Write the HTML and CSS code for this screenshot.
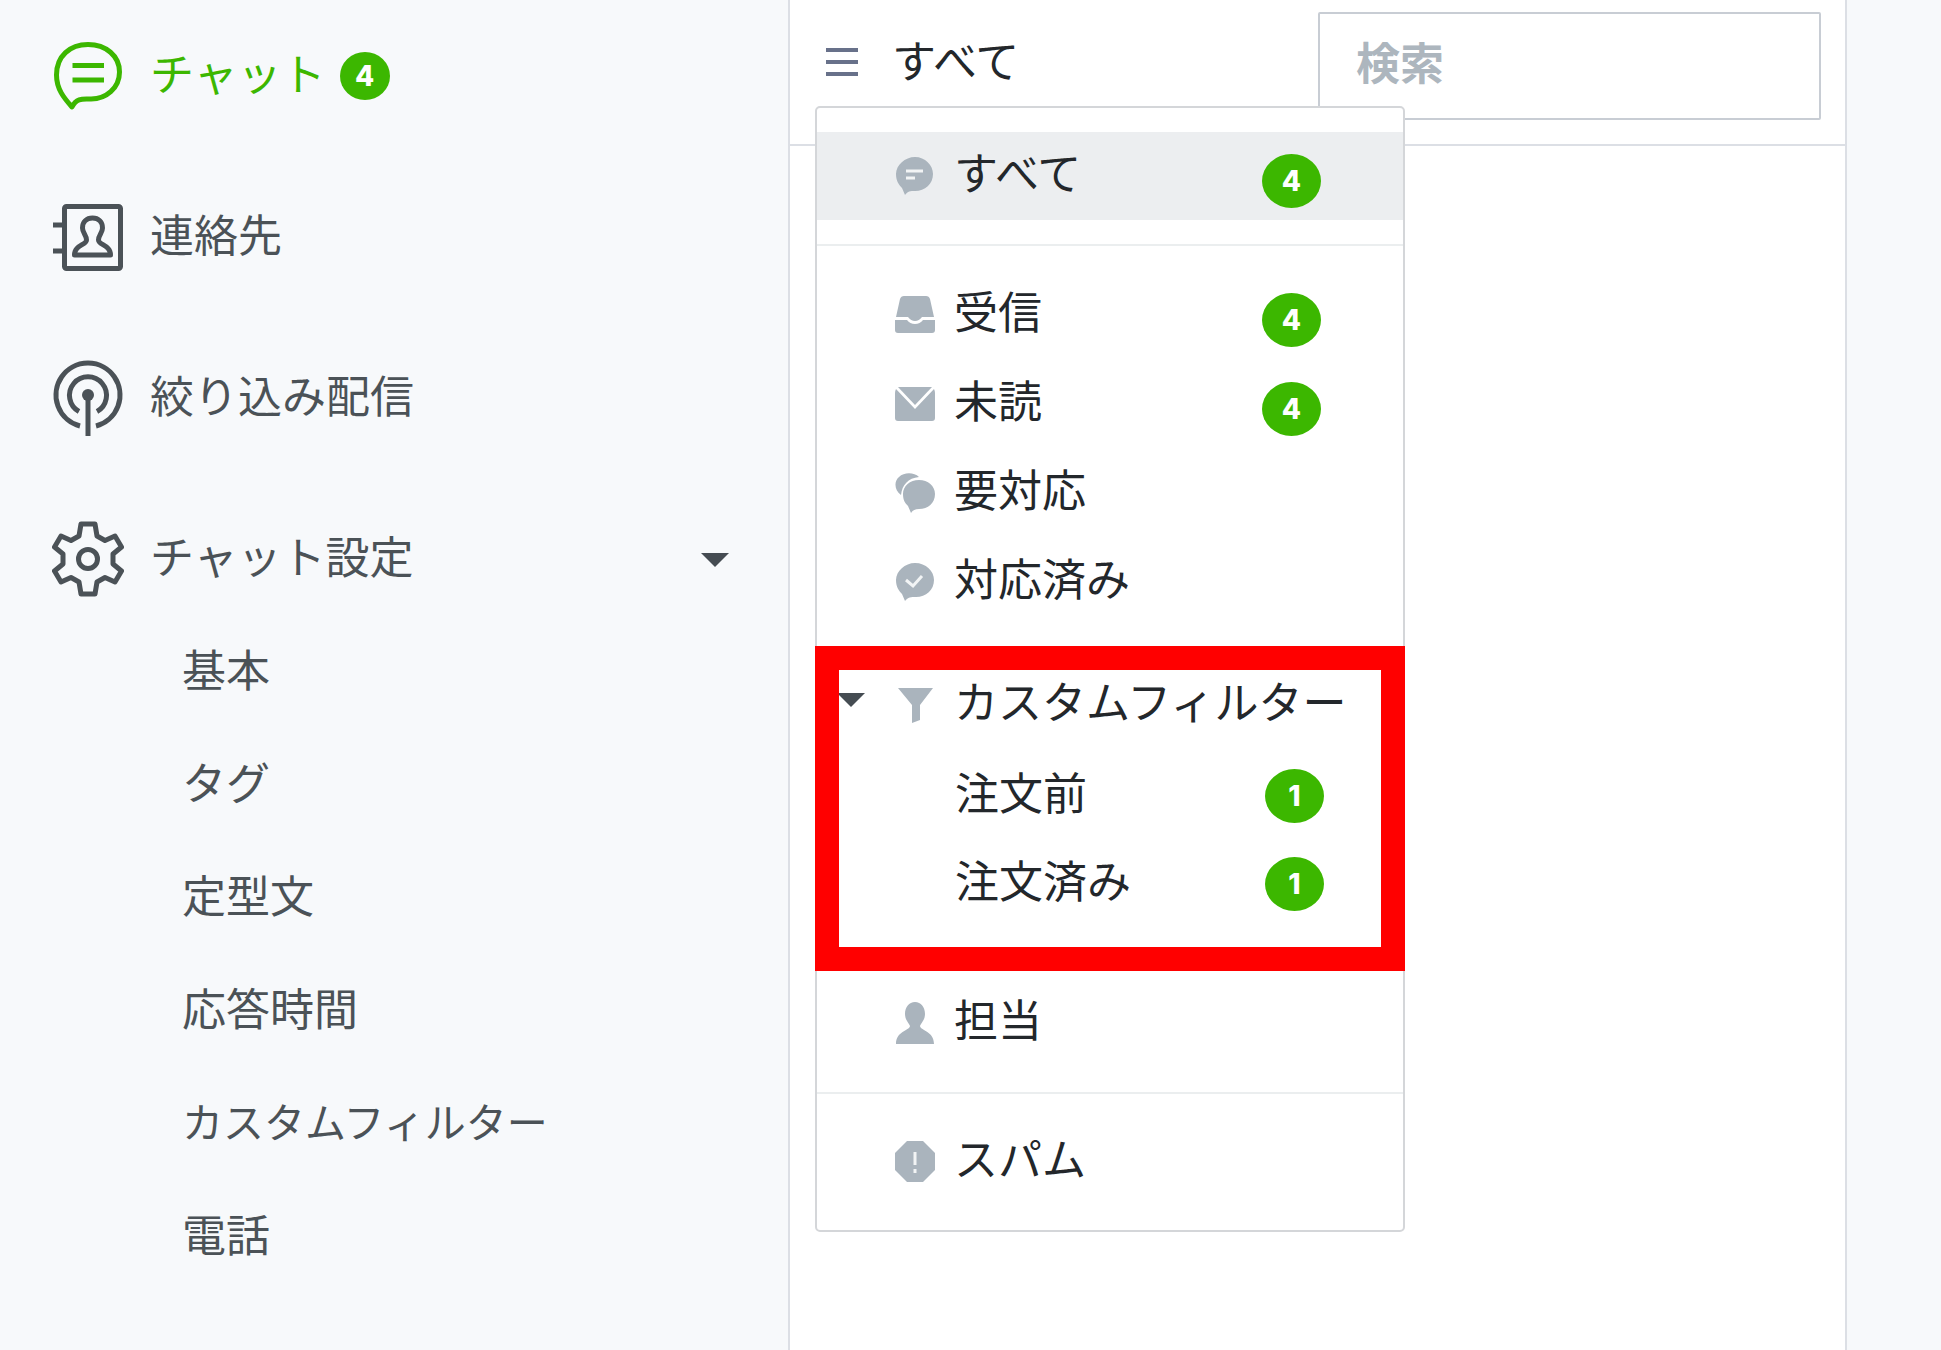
FILE: index.html
```html
<!DOCTYPE html>
<html lang="ja">
<head>
    <meta charset="UTF-8">
    <title>チャット</title>
    <meta name="viewport" content="width=device-width,initial-scale=1">
    <link rel="stylesheet" href="styles.css">
</head>
<body>
<div class="page">
    <!-- サイドバー -->
    <nav class="sidebar">
        <ul class="nav">
            <li>
                <a class="nav-link active" href="#">
                    <svg class="nav-icon" viewBox="0 0 72 76">
                        <path d="M36 6.500C54 6.500 67.500 18 67.500 34C67.500 50 54 61.500 38 61C29 60.500 24 61 20 69C12 60 4.500 51 4.500 37C4.500 18 18 6.500 36 6.500Z"/>
                        <path d="M20.500 27.500H52M20.500 42H52"/>
                    </svg>
                    <span class="nav-text">チャット</span>
                    <span class="badge badge-nav">4</span>
                </a>
            </li>
            <li>
                <a class="nav-link" href="#">
                    <svg class="nav-icon" viewBox="0 0 72 76">
                        <rect x="12.500" y="7.500" width="56" height="62" rx="2"/>
                        <path d="M1 26H12M1 52H12"/>
                        <path d="M40.500 19C46.500 19 50.500 23 50.500 29C50.500 34 46.500 36 46.500 41C46.500 46 58.500 46 58.500 56H22.500C22.500 46 34.500 46 34.500 41C34.500 36 30.500 34 30.500 29C30.500 23 34.500 19 40.500 19Z"/>
                    </svg>
                    <span class="nav-text">連絡先</span>
                </a>
            </li>
            <li>
                <a class="nav-link" href="#">
                    <svg class="nav-icon" viewBox="0 0 72 76">
                        <path d="M28 66A32 32 0 1 1 44 66"/>
                        <path d="M27 51.500A18.500 18.500 0 1 1 45 51.500"/>
                        <path d="M36 35V76"/>
                        <circle class="solid" cx="36" cy="35" r="6"/>
                    </svg>
                    <span class="nav-text">絞り込み配信</span>
                </a>
            </li>
            <li>
                <a class="nav-link" href="#">
                    <svg class="nav-icon" viewBox="0 0 72 76">
                        <path d="M29 3H43L45 15L53 19.500L63 15L69.500 26L61 33V43L69.500 50L63 61L53 56.500L45 61L43 73H29L27 61L19 56.500L9 61L2.500 50L11 43V33L2.500 26L9 15L19 19.500L27 15Z"/>
                        <circle cx="36" cy="38" r="9.500"/>
                    </svg>
                    <span class="nav-text">チャット設定</span>
                    <svg class="caret caret-nav" viewBox="0 0 28 14"><path d="M0 0H28L14 14Z"/></svg>
                </a>
                <ul class="sub-nav">
                    <li><a href="#">基本</a></li>
                    <li><a href="#">タグ</a></li>
                    <li><a href="#">定型文</a></li>
                    <li><a href="#">応答時間</a></li>
                    <li><a class="small" href="#">カスタムフィルター</a></li>
                    <li><a href="#">電話</a></li>
                </ul>
            </li>
        </ul>
    </nav>

    <!-- チャット一覧 -->
    <main class="chat-list">
        <header class="toolbar">
            <button class="filter-toggle" type="button">
                <svg class="bars" viewBox="0 0 32 32"><path d="M0 4H32M0 16H32M0 28H32"/></svg>
                <span>すべて</span>
            </button>
            <input class="search" type="search" placeholder="検索" aria-label="検索">

            <!-- フィルターメニュー -->
            <div class="menu">
                <ul class="menu-group">
                    <li>
                        <a class="menu-item selected" href="#">
                            <svg class="menu-icon" viewBox="0 0 40 40">
                                <path d="M20 1C30 1 38 9 38 18C38 28 30 35 20 35C15 35 13 35 10 39C9 37 8 34 7 32C4 29 1 25 1 18C1 9 10 1 20 1Z"/>
                                <path class="cut" d="M11 15H28M11 22H20"/>
                            </svg>
                            <span class="menu-text">すべて</span>
                            <span class="badge">4</span>
                        </a>
                    </li>
                </ul>
                <ul class="menu-group states">
                    <li>
                        <a class="menu-item" href="#">
                            <svg class="menu-icon" viewBox="0 0 40 40">
                                <path d="M9 1H31Q34 1 35 4L39 22H27Q24 26 20 26Q16 26 13 22H1L5 4Q6 1 9 1Z"/>
                                <path d="M0 25H12Q15 29 20 29Q25 29 28 25H40V35Q40 38 37 38H3Q0 38 0 35Z"/>
                            </svg>
                            <span class="menu-text">受信</span>
                            <span class="badge">4</span>
                        </a>
                    </li>
                    <li>
                        <a class="menu-item" href="#">
                            <svg class="menu-icon" viewBox="0 0 40 40">
                                <path d="M3 3H37L20 21Z"/>
                                <path d="M1 5L20 25L39 5Q40 7 40 9V34Q40 37 37 37H3Q0 37 0 34V9Q0 7 1 5Z"/>
                            </svg>
                            <span class="menu-text">未読</span>
                            <span class="badge">4</span>
                        </a>
                    </li>
                    <li>
                        <a class="menu-item" href="#">
                            <svg class="menu-icon" viewBox="0 0 40 40">
                                <path d="M6 22C-1 17-1 8 4 4C9-1 19-1 24 4C13 5 7 12 6 22Z"/>
                                <path d="M24 7C33 7 40 13 40 21C40 30 33 36 24 36C20 36 18 37 16 40C15 38 14 35 13 33C10 30 8 27 8 21C8 13 15 7 24 7Z"/>
                            </svg>
                            <span class="menu-text">要対応</span>
                        </a>
                    </li>
                    <li>
                        <a class="menu-item" href="#">
                            <svg class="menu-icon" viewBox="0 0 40 40">
                                <path d="M20 1C31 1 39 9 39 18C39 28 31 35 21 35C16 35 13 35 10 39C9 37 8 34 7 32C4 29 1 25 1 18C1 9 10 1 20 1Z"/>
                                <path class="cut" d="M11 18L18 24L27 14"/>
                            </svg>
                            <span class="menu-text">対応済み</span>
                        </a>
                    </li>
                </ul>
                <section class="custom">
                    <button class="custom-head" type="button">
                        <svg class="caret" viewBox="0 0 28 14"><path d="M0 0H28L14 14Z"/></svg>
                        <svg class="menu-icon" viewBox="0 0 40 40"><path d="M3 3H38L25 20V35L17 38V20Z"/></svg>
                        <span class="menu-text">カスタムフィルター</span>
                    </button>
                    <ul>
                        <li>
                            <a class="menu-item custom-item" href="#">
                                <span class="menu-text">注文前</span>
                                <span class="badge">1</span>
                            </a>
                        </li>
                        <li>
                            <a class="menu-item custom-item" href="#">
                                <span class="menu-text">注文済み</span>
                                <span class="badge">1</span>
                            </a>
                        </li>
                    </ul>
                </section>
                <ul class="menu-group owner">
                    <li>
                        <a class="menu-item" href="#">
                            <svg class="menu-icon tall" viewBox="0 0 40 44">
                                <path d="M20 1C26 1 30 6 30 13C30 19 26 22 25 25C26 30 39 30 39 43H1C1 30 14 30 15 25C14 22 10 19 10 13C10 6 14 1 20 1Z"/>
                            </svg>
                            <span class="menu-text">担当</span>
                        </a>
                    </li>
                </ul>
                <ul class="menu-group">
                    <li>
                        <a class="menu-item" href="#">
                            <svg class="menu-icon tall" viewBox="0 0 40 44">
                                <path d="M12 1H28L40 13V30L28 42H12L0 30V13Z"/>
                                <path class="cut" d="M20 12V25M20 29V33"/>
                            </svg>
                            <span class="menu-text">スパム</span>
                        </a>
                    </li>
                </ul>
            </div>
        </header>
    </main>
</div>
</body>
</html>
```

FILE: styles.css
```css
* {
    box-sizing: border-box;
}

body {
    margin: 0;
    background: #f7f9fb;
    color: #23272b;
    font-family: "Noto Sans CJK JP", sans-serif;
    font-size: 44px;
    line-height: 60px;
}

ul {
    list-style: none;
    margin: 0;
    padding: 0;
}

a {
    color: inherit;
    text-decoration: none;
}

button {
    border: 0;
    padding: 0;
    background: none;
    color: inherit;
    font: inherit;
}

svg {
    display: block;
    flex: none;
}

.page {
    display: grid;
    grid-template-columns: 790fr 1057fr 94fr;
    min-height: 100vh;
}

/* サイドバー */
.sidebar {
    border-right: 2px solid #dcdfe5;
    color: #4b5257;
}

.nav {
    display: flex;
    flex-direction: column;
    gap: 61px;
    padding-top: 26px;
}

.nav-link {
    display: flex;
    align-items: center;
    height: 100px;
    padding: 0 59px 0 52px;
}

.nav-link.active {
    color: #3cb700;
}

.nav-icon {
    width: 72px;
    height: 76px;
    margin-right: 26px;
    fill: none;
    stroke: currentColor;
    stroke-width: 5;
    stroke-linejoin: round;
}

.nav-icon .solid {
    fill: currentColor;
    stroke: none;
}

.nav-text {
    padding-bottom: 8px;
}

.caret {
    width: 28px;
    height: 14px;
    fill: #454c52;
}

.caret-nav {
    margin-top: 2px;
    margin-left: auto;
}

.sub-nav {
    padding: 2px 0 0 182px;
}

.sub-nav a {
    display: flex;
    align-items: center;
    height: 113px;
}

.sub-nav .small {
    font-size: 41px;
}

.badge {
    display: flex;
    align-items: center;
    justify-content: center;
    width: 59px;
    height: 54px;
    margin: 10px 0 0 auto;
    border-radius: 50%;
    background: #3cb700;
    color: #fff;
    font: 800 28px/30px Inter, sans-serif;
}

.badge-nav {
    width: 50px;
    height: 48px;
    margin: 0 0 0 14px;
}

/* チャット一覧 */
.chat-list {
    border-right: 2px solid #dcdfe5;
    background: #fff;
}

.toolbar {
    position: relative;
    display: flex;
    align-items: center;
    justify-content: space-between;
    padding: 12px 24px 24px 36px;
    border-bottom: 2px solid #dcdfe5;
}

.filter-toggle {
    display: flex;
    align-items: center;
    gap: 34px;
    margin-bottom: 8px;
}

.filter-toggle span {
    padding-bottom: 6px;
}

.bars {
    width: 32px;
    height: 32px;
    fill: none;
    stroke: #68718a;
    stroke-width: 4;
}

.search {
    flex: 0 1 503px;
    min-width: 0;
    height: 108px;
    padding: 0 24px 10px 36px;
    border: 2px solid #c8cdd4;
    border-radius: 2px;
    background: #fff;
    color: inherit;
    font: bold 44px/60px "Noto Sans CJK JP", sans-serif;
    appearance: none;
}

.search::placeholder {
    color: #adb6be;
    opacity: 1;
}

/* フィルターメニュー */
.menu {
    position: absolute;
    top: 106px;
    left: 25px;
    width: 590px;
    border: 2px solid #d4d6d9;
    border-radius: 5px;
    background: #fff;
}

.menu-group {
    padding: 24px 0;
}

.menu-group + .menu-group {
    border-top: 2px solid #ebeeef;
}

.menu-item {
    display: flex;
    align-items: center;
    height: 88px;
    padding: 0 82px 0 78px;
}

.menu-item.selected {
    background: #eceef0;
}

.menu-icon {
    width: 40px;
    height: 40px;
    margin-right: 19px;
    fill: #aab4bd;
}

.menu-icon.tall {
    height: 44px;
}

.menu-icon .cut {
    fill: none;
    stroke: #f2f4f5;
    stroke-width: 3;
}

.menu-text {
    padding-bottom: 10px;
    white-space: nowrap;
}

.states {
    padding-bottom: 20px;
}

.states .menu-item {
    height: 89px;
}

.custom {
    margin: 0 -2px;
    padding-bottom: 19px;
    border: 24px solid #f00;
    overflow: hidden;
}

.custom-head {
    display: flex;
    align-items: center;
    height: 70px;
    margin: 0 0 12px -2px;
}

.custom-head .caret {
    margin: 0 30px 10px 0;
}

.custom-item {
    padding: 0 57px 0 116px;
}

.custom-item .badge {
    margin-top: 0;
}

.owner {
    padding: 8px 0 25px;
}
```
